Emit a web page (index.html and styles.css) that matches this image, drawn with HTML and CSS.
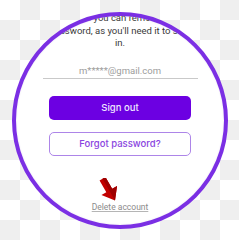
FILE: index.html
```html
<!DOCTYPE html>
<html>
<head>
<meta charset="utf-8">
<link rel="stylesheet" href="styles.css">
</head>
<body>
<div class="lens">
  <div class="screen">
    <p class="note">Make sure you can remember your password, as you'll need it to sign<br>in.</p>
    <div class="email">m*****@gmail.com</div>
    <button class="btn primary">Sign out</button>
    <button class="btn outline">Forgot password?</button>
    <svg class="arrow" width="24" height="24" viewBox="0 0 24 24">
      <g transform="rotate(-30 12 12)">
        <polygon points="8.6,-1 15.4,-1 15.4,12.5 21,12.5 12,24 3,12.5 8.6,12.5" fill="#c20000"/>
        <polygon points="12,-1 15.4,-1 15.4,12.5 21,12.5 12,24" fill="#9e0000"/>
      </g>
    </svg>
    <a class="delete">Delete account</a>
  </div>
</div>
</body>
</html>
```
FILE: styles.css
```css
html, body {
  margin: 0;
  padding: 0;
}
body {
  width: 239px;
  height: 240px;
  overflow: hidden;
  background: repeating-conic-gradient(#efefef 0 25%, #ffffff 0 50%) 0 0 / 40px 40px;
}
.lens {
  margin: 12px 0 0 12px;
  width: 216px;
  height: 217px;
  box-sizing: border-box;
  border: 4px solid #7b2fe4;
  border-radius: 50%;
  overflow: hidden;
  background: #ffffff;
  box-shadow: inset 0 0 2px #e6e0ee;
}
.screen {
  display: flex;
  flex-direction: column;
  align-items: center;
  font-family: Roboto, "Liberation Sans", sans-serif;
}
.note {
  margin: -4px 0 0 0;
  width: 170px;
  font-size: 9.5px;
  line-height: 12.5px;
  color: #3a3a3a;
  text-align: center;
}
.email {
  margin-top: 15px;
  width: 155px;
  height: 13px;
  font-size: 9.5px;
  line-height: 12px;
  color: #9c9c9c;
  text-align: center;
  border-bottom: 1.5px solid #c9c9c9;
}
.btn {
  width: 142px;
  height: 24px;
  box-sizing: border-box;
  border-radius: 5px;
  font-family: Inter, "Noto Sans", sans-serif;
  font-weight: 500;
  font-size: 9.5px;
  padding: 0;
}
.primary {
  margin-top: 17px;
  background: #6c00e2;
  border: none;
  color: #efe6ff;
}
.outline {
  margin-top: 12px;
  background: #ffffff;
  border: 1px solid #ad85e8;
  color: #8a45e0;
}
.arrow {
  display: block;
  margin: 22px 0 0 -22px;
}
.delete {
  margin-top: 0;
  font-size: 8.5px;
  line-height: 10px;
  color: #8c8c8c;
  text-decoration: underline;
  text-decoration-color: #b5b5b5;
}
```
